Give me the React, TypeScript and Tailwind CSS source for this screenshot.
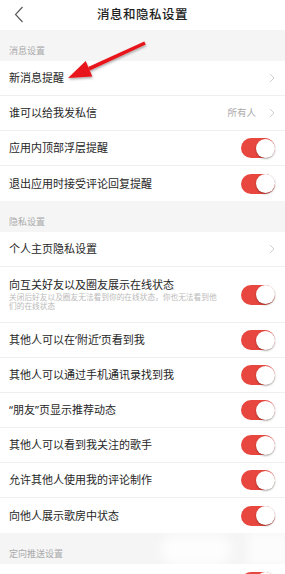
import React from "react";

const Toggle = () => (
  <div className="relative w-[34px] h-[20px] rounded-full bg-[#e8473f] shrink-0">
    <div className="absolute right-0 top-[0.5px] w-[19px] h-[19px] rounded-full bg-white shadow-[0_1px_2px_rgba(0,0,0,0.35)]" />
  </div>
);

const Chevron = () => (
  <svg width="6" height="10" viewBox="0 0 6 10" className="shrink-0">
    <path d="M1 1 L5 5 L1 9" fill="none" stroke="#c8c8c8" strokeWidth="0.9" />
  </svg>
);

type Row = {
  title: string;
  sub?: string;
  right: "toggle" | "chevron" | "value";
  value?: string;
};

const SectionLabel = ({ text }: { text: string }) => (
  <div className="h-[31px] bg-[#f5f5f5] flex items-end pl-[9px] pb-[6px] text-[9px] text-[#aaaaaa] leading-none">
    {text}
  </div>
);

const RowView = ({ row, last }: { row: Row; last?: boolean }) => (
  <div
    className={`flex items-center justify-between pl-[9px] pr-[10px] bg-white ${
      row.sub ? "h-[56px]" : "h-[35px]"
    } ${last ? "" : "border-b border-[#efefef]"}`}
  >
    <div className="flex flex-col">
      <div className="text-[11px] text-[#262626] leading-[14px]">{row.title}</div>
      {row.sub && (
        <div className="text-[7.7px] text-[#bbbbbb] leading-[9px] w-[212px] mt-[1px]">
          {row.sub}
        </div>
      )}
    </div>
    {row.right === "toggle" && <Toggle />}
    {row.right === "chevron" && <Chevron />}
    {row.right === "value" && (
      <div className="flex items-center gap-[13px]">
        <span className="text-[9.5px] text-[#aaaaaa]">{row.value}</span>
        <Chevron />
      </div>
    )}
  </div>
);

const msg: Row[] = [
  { title: "新消息提醒", right: "chevron" },
  { title: "谁可以给我发私信", right: "value", value: "所有人" },
  { title: "应用内顶部浮层提醒", right: "toggle" },
  { title: "退出应用时接受评论回复提醒", right: "toggle" },
];

const privacy: Row[] = [
  { title: "个人主页隐私设置", right: "chevron" },
  {
    title: "向互关好友以及圈友展示在线状态",
    sub: "关闭后好友以及圈友无法看到你的在线状态，你也无法看到他们的在线状态",
    right: "toggle",
  },
  { title: "其他人可以在‘附近’页看到我", right: "toggle" },
  { title: "其他人可以通过手机通讯录找到我", right: "toggle" },
  { title: "“朋友”页显示推荐动态", right: "toggle" },
  { title: "其他人可以看到我关注的歌手", right: "toggle" },
  { title: "允许其他人使用我的评论制作", right: "toggle" },
  { title: "向他人展示歌房中状态", right: "toggle" },
];

export default function App() {
  return (
    <div
      className="relative w-[285px] h-[574px] overflow-hidden bg-white"
      style={{ fontFamily: '"Noto Sans", "Noto Sans CJK SC", sans-serif' }}
    >
      <div className="relative h-[30px] flex items-center justify-center bg-white">
        <svg width="10" height="17" viewBox="0 0 10 17" className="absolute left-[14px] top-[6px]">
          <path d="M8.5 1 L1.5 8.5 L8.5 16" fill="none" stroke="#555555" strokeWidth="1.1" />
        </svg>
        <span className="text-[12.5px] font-medium text-[#222222] tracking-[0.5px]">消息和隐私设置</span>
      </div>
      <SectionLabel text="消息设置" />
      {msg.map((r, i) => (
        <RowView key={i} row={r} last={i === msg.length - 1} />
      ))}
      <SectionLabel text="隐私设置" />
      {privacy.map((r, i) => (
        <RowView key={i} row={r} last={i === privacy.length - 1} />
      ))}
      <div className="relative">
        <SectionLabel text="定向推送设置" />
        <div className="absolute left-[160px] top-[2px] w-[72px] h-[30px] rounded-full bg-white/80 blur-[6px]" />
        <div className="absolute left-[248px] top-[0px] w-[40px] h-[32px] bg-white/70 blur-[4px]" />
      </div>
      <RowView row={{ title: "个性化服务", right: "toggle" }} last />

      <svg
        width="285"
        height="100"
        viewBox="0 0 285 100"
        className="absolute left-0 top-0 pointer-events-none"
      >
        <defs>
          <filter id="sh" x="-20%" y="-20%" width="140%" height="160%">
            <feDropShadow dx="0.5" dy="1.5" stdDeviation="1.2" floodColor="#000" floodOpacity="0.35" />
          </filter>
        </defs>
        <g filter="url(#sh)" fill="#e8141a">
          <polygon points="144.3,41.6 145.7,44.4 89.8,70.6 88.2,67" />
          <polygon points="68,78 85.7,61 92.3,76.4" />
        </g>
      </svg>
    </div>
  );
}
